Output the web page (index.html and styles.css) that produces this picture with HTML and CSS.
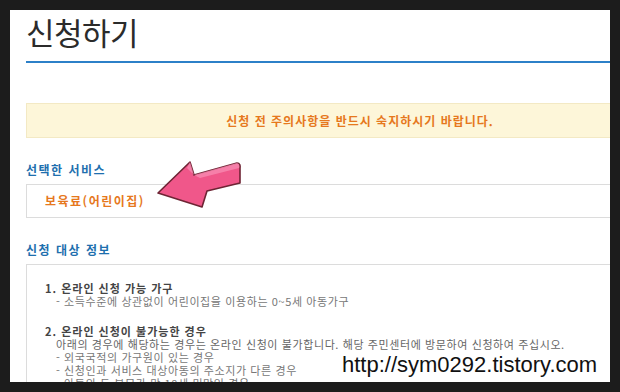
FILE: index.html
```html
<!DOCTYPE html>
<html lang="ko">
<head>
  <meta charset="UTF-8" />
  <meta name="viewport" content="width=device-width, initial-scale=1.0"/>
  <title>신청하기</title>
  <link rel="stylesheet" href="styles.css">
</head>
<body>

  <div class="frame">
    <div class="page">

      <h1 class="page-title">신청하기</h1>

      <!-- Notice -->
      <div class="notice">신청 전 주의사항을 반드시 숙지하시기 바랍니다.</div>

      <!-- Selected service -->
      <h3 class="section-title">선택한 서비스</h3>
      <div class="service-box">보육료(어린이집)</div>

      <!-- Target info -->
      <h3 class="section-title">신청 대상 정보</h3>
      <div class="info-box">
        <div class="info-group">
          <p class="info-head">1. 온라인 신청 가능 가구</p>
          <p class="info-line">- 소득수준에 상관없이 어린이집을 이용하는 0~5세 아동가구</p>
        </div>
        <div class="info-group">
          <p class="info-head">2. 온라인 신청이 불가능한 경우</p>
          <p class="info-text">아래의 경우에 해당하는 경우는 온라인 신청이 불가합니다. 해당 주민센터에 방문하여 신청하여 주십시오.</p>
          <p class="info-line">- 외국국적의 가구원이 있는 경우</p>
          <p class="info-line">- 신청인과 서비스 대상아동의 주소지가 다른 경우</p>
          <p class="info-line">- 아동의 두 부모가 만 18세 미만인 경우</p>
        </div>
      </div>

    </div>

    <!-- Pointer arrow -->
    <svg class="arrow" width="100" height="60" viewBox="0 0 100 60">
      <path d="M8 43 L40 12 L44 25 L87 13 Q91 13 90 19 L90 33 L57 41 L52 57 Z"
            fill="#f0578a" stroke="#6e2434" stroke-width="1.6" stroke-linejoin="round"/>
      <path d="M44 25 L87 13 Q90 14 89 18 L50 28 Z" fill="#f78ab0" opacity="0.8"/>
      <path d="M40 12 L44 25 L37 18 Z" fill="#f78ab0" opacity="0.8"/>
    </svg>

    <div class="watermark">http://sym0292.tistory.com</div>
  </div>

</body>
</html>
```

FILE: styles.css
```css
body {
  margin: 0;
  background: #1c1c1c;
  font-family: "Noto Sans CJK KR", "Noto Sans", sans-serif;
}

.frame {
  position: relative;
  margin: 10px;
  width: 600px;
  height: 372px;
  background: #fff;
  overflow: hidden;
}

.page {
  width: 668px;
  padding: 0 16px;
}

.page-title {
  margin: 0;
  font-size: 31px;
  font-weight: 400;
  line-height: 44px;
  letter-spacing: -0.5px;
  color: #2b2b2b;
  border-bottom: 2px solid #2c80c8;
  padding-bottom: 7px;
}

.notice {
  margin-top: 40px;
  height: 33px;
  line-height: 33px;
  background: #fdf6d9;
  border: 1px solid #f3e9c4;
  text-align: center;
  color: #e6781d;
  font-size: 12px;
  font-weight: 700;
  letter-spacing: 1px;
}

.section-title {
  margin: 24px 0 6px;
  font-size: 12px;
  font-weight: 700;
  color: #1e6fae;
  letter-spacing: 1.5px;
  line-height: 16px;
}

.service-box {
  height: 32px;
  line-height: 32px;
  border: 1px solid #dcdcdc;
  padding-left: 18px;
  color: #e6781d;
  font-size: 12px;
  font-weight: 700;
  letter-spacing: 1.5px;
}

.info-box {
  border: 1px solid #dcdcdc;
  padding: 17px 18px;
}

.info-group {
  margin-bottom: 17px;
}

.info-group p {
  margin: 0;
  font-size: 11px;
  line-height: 13px;
  letter-spacing: 0.6px;
}

.info-group .info-head {
  font-weight: 700;
  color: #444;
  letter-spacing: 1px;
}

.info-text {
  color: #666;
  padding-left: 11px;
}

.info-line {
  color: #777;
  padding-left: 11px;
}

.arrow {
  position: absolute;
  left: 140px;
  top: 140px;
}

.watermark {
  position: absolute;
  left: 332px;
  top: 342px;
  font-family: "Liberation Sans", sans-serif;
  font-size: 22px;
  line-height: 25px;
  color: #111;
}
```
